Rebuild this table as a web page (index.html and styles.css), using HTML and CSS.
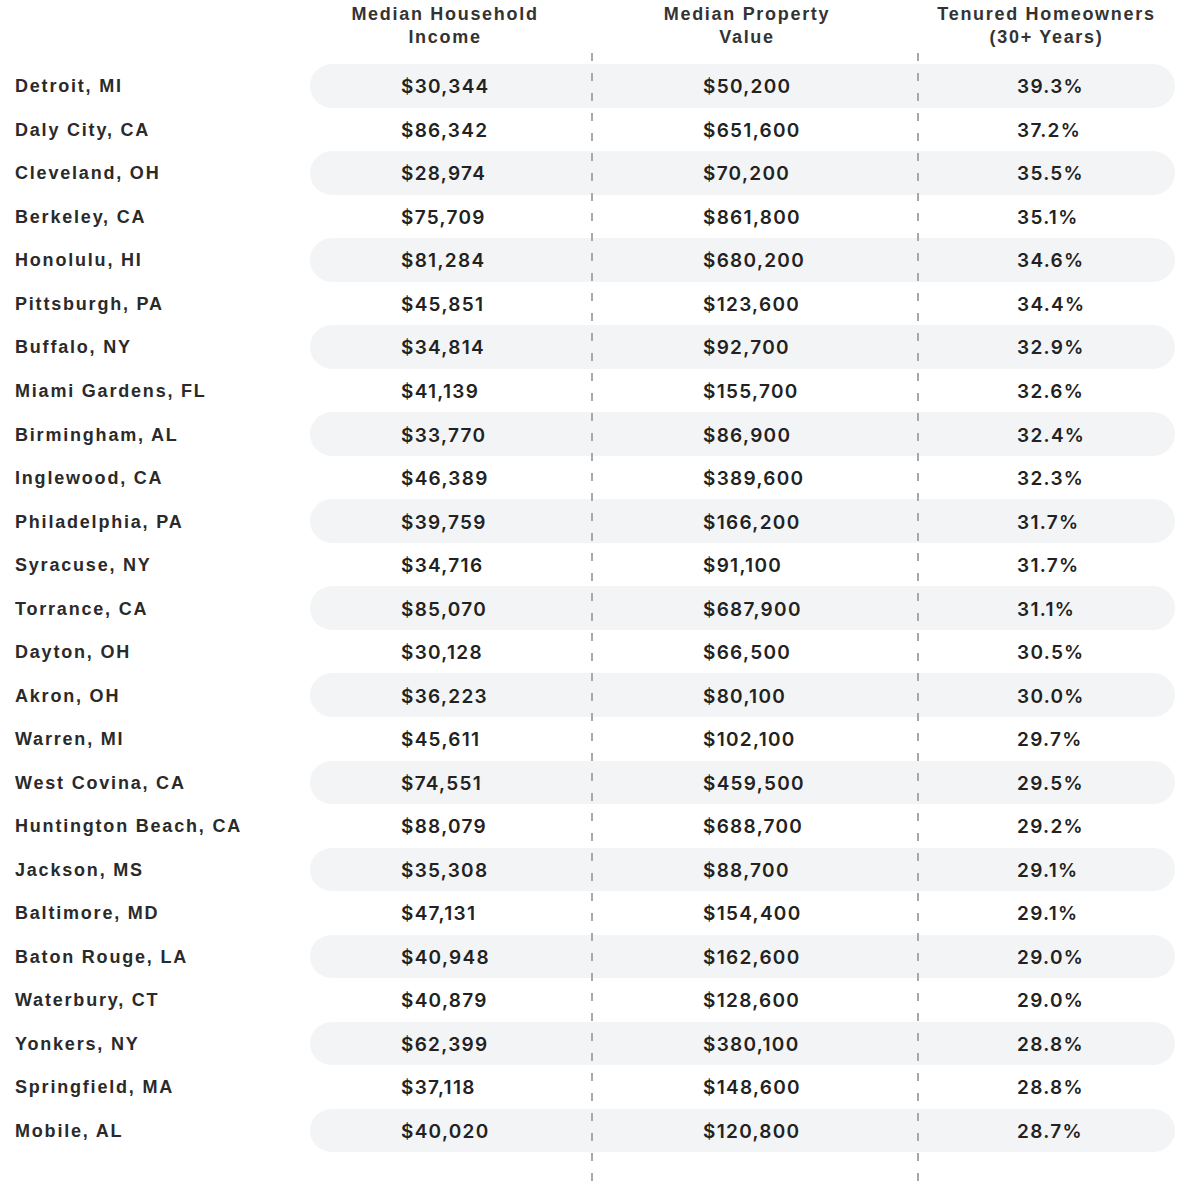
FILE: index.html
```html
<!DOCTYPE html>
<html lang="en">
<head>
<meta charset="utf-8">
<title>Tenured Homeowners</title>
<link rel="stylesheet" href="styles.css">
</head>
<body>
<div class="table">
  <div class="head">
    <div class="hcity"></div>
    <div class="hcell h1">Median Household<br>Income</div>
    <div class="hcell h2">Median Property<br>Value</div>
    <div class="hcell h3">Tenured Homeowners<br>(30+ Years)</div>
  </div>
  <div class="rows">
    <div class="row shade"><div class="city">Detroit, MI</div><div class="vals"><div class="v v1">$30,344</div><div class="v v2">$50,200</div><div class="v v3">39.3%</div></div></div>
    <div class="row"><div class="city">Daly City, CA</div><div class="vals"><div class="v v1">$86,342</div><div class="v v2">$651,600</div><div class="v v3">37.2%</div></div></div>
    <div class="row shade"><div class="city">Cleveland, OH</div><div class="vals"><div class="v v1">$28,974</div><div class="v v2">$70,200</div><div class="v v3">35.5%</div></div></div>
    <div class="row"><div class="city">Berkeley, CA</div><div class="vals"><div class="v v1">$75,709</div><div class="v v2">$861,800</div><div class="v v3">35.1%</div></div></div>
    <div class="row shade"><div class="city">Honolulu, HI</div><div class="vals"><div class="v v1">$81,284</div><div class="v v2">$680,200</div><div class="v v3">34.6%</div></div></div>
    <div class="row"><div class="city">Pittsburgh, PA</div><div class="vals"><div class="v v1">$45,851</div><div class="v v2">$123,600</div><div class="v v3">34.4%</div></div></div>
    <div class="row shade"><div class="city">Buffalo, NY</div><div class="vals"><div class="v v1">$34,814</div><div class="v v2">$92,700</div><div class="v v3">32.9%</div></div></div>
    <div class="row"><div class="city">Miami Gardens, FL</div><div class="vals"><div class="v v1">$41,139</div><div class="v v2">$155,700</div><div class="v v3">32.6%</div></div></div>
    <div class="row shade"><div class="city">Birmingham, AL</div><div class="vals"><div class="v v1">$33,770</div><div class="v v2">$86,900</div><div class="v v3">32.4%</div></div></div>
    <div class="row"><div class="city">Inglewood, CA</div><div class="vals"><div class="v v1">$46,389</div><div class="v v2">$389,600</div><div class="v v3">32.3%</div></div></div>
    <div class="row shade"><div class="city">Philadelphia, PA</div><div class="vals"><div class="v v1">$39,759</div><div class="v v2">$166,200</div><div class="v v3">31.7%</div></div></div>
    <div class="row"><div class="city">Syracuse, NY</div><div class="vals"><div class="v v1">$34,716</div><div class="v v2">$91,100</div><div class="v v3">31.7%</div></div></div>
    <div class="row shade"><div class="city">Torrance, CA</div><div class="vals"><div class="v v1">$85,070</div><div class="v v2">$687,900</div><div class="v v3">31.1%</div></div></div>
    <div class="row"><div class="city">Dayton, OH</div><div class="vals"><div class="v v1">$30,128</div><div class="v v2">$66,500</div><div class="v v3">30.5%</div></div></div>
    <div class="row shade"><div class="city">Akron, OH</div><div class="vals"><div class="v v1">$36,223</div><div class="v v2">$80,100</div><div class="v v3">30.0%</div></div></div>
    <div class="row"><div class="city">Warren, MI</div><div class="vals"><div class="v v1">$45,611</div><div class="v v2">$102,100</div><div class="v v3">29.7%</div></div></div>
    <div class="row shade"><div class="city">West Covina, CA</div><div class="vals"><div class="v v1">$74,551</div><div class="v v2">$459,500</div><div class="v v3">29.5%</div></div></div>
    <div class="row"><div class="city">Huntington Beach, CA</div><div class="vals"><div class="v v1">$88,079</div><div class="v v2">$688,700</div><div class="v v3">29.2%</div></div></div>
    <div class="row shade"><div class="city">Jackson, MS</div><div class="vals"><div class="v v1">$35,308</div><div class="v v2">$88,700</div><div class="v v3">29.1%</div></div></div>
    <div class="row"><div class="city">Baltimore, MD</div><div class="vals"><div class="v v1">$47,131</div><div class="v v2">$154,400</div><div class="v v3">29.1%</div></div></div>
    <div class="row shade"><div class="city">Baton Rouge, LA</div><div class="vals"><div class="v v1">$40,948</div><div class="v v2">$162,600</div><div class="v v3">29.0%</div></div></div>
    <div class="row"><div class="city">Waterbury, CT</div><div class="vals"><div class="v v1">$40,879</div><div class="v v2">$128,600</div><div class="v v3">29.0%</div></div></div>
    <div class="row shade"><div class="city">Yonkers, NY</div><div class="vals"><div class="v v1">$62,399</div><div class="v v2">$380,100</div><div class="v v3">28.8%</div></div></div>
    <div class="row"><div class="city">Springfield, MA</div><div class="vals"><div class="v v1">$37,118</div><div class="v v2">$148,600</div><div class="v v3">28.8%</div></div></div>
    <div class="row shade"><div class="city">Mobile, AL</div><div class="vals"><div class="v v1">$40,020</div><div class="v v2">$120,800</div><div class="v v3">28.7%</div></div></div>
  </div>
  <div class="divider d1"></div>
  <div class="divider d2"></div>
</div>
</body>
</html>
```
FILE: styles.css
```css
html, body {
  margin: 0;
  padding: 0;
  background: #ffffff;
}

.table {
  position: relative;
  width: 1192px;
  height: 1202px;
  color: #222222;
}

.head {
  display: flex;
  padding-top: 3px;
  height: 64px;
  box-sizing: border-box;
}

.hcity {
  width: 310px;
}

.hcell {
  font-family: "Liberation Sans", Arial, sans-serif;
  font-weight: bold;
  font-size: 18px;
  line-height: 23px;
  letter-spacing: 1.7px;
  text-align: center;
  color: #333333;
}

.h1 { width: 270px; padding-right: 12px; }
.h2 { width: 310px; padding-right: 16px; }
.h3 { width: 257px; }

.rows {
  display: flex;
  flex-direction: column;
}

.row {
  display: flex;
  align-items: stretch;
  height: 43.54px;
}

.city {
  width: 295px;
  padding-left: 15px;
  padding-top: 2px;
  display: flex;
  align-items: center;
  font-family: "Liberation Sans", Arial, sans-serif;
  font-weight: bold;
  font-size: 18px;
  letter-spacing: 1.8px;
  color: #2a2a2a;
}

.vals {
  display: flex;
  width: 865px;
  border-radius: 22px;
}

.shade .vals {
  background: #f3f4f5;
}

.v {
  display: flex;
  align-items: center;
  padding-top: 2px;
  font-family: Inter, "Noto Sans", sans-serif;
  font-weight: 600;
  font-size: 19px;
  letter-spacing: 1.3px;
  color: #222222;
}

.v1 { width: 282px; padding-left: 91px; box-sizing: border-box; }
.v2 { width: 326px; padding-left: 111px; box-sizing: border-box; }
.v3 { width: 257px; padding-left: 99px; box-sizing: border-box; }

.divider {
  position: absolute;
  top: 53px;
  width: 2px;
  height: 1138px;
  background: repeating-linear-gradient(to bottom, #a8a8a8 0, #a8a8a8 8px, transparent 8px, transparent 20px);
}

.d1 { left: 591px; }
.d2 { left: 917px; }
```
